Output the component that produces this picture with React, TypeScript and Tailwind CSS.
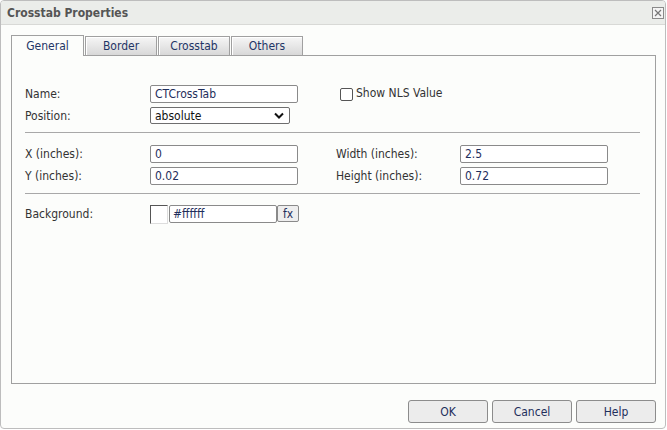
import React from "react";

const font = { fontFamily: '"DejaVu Sans Condensed", "DejaVu Sans", sans-serif' };

const tabs = ["General", "Border", "Crosstab", "Others"];

const Field = ({ value, width = "w-[148px]" }: { value: string; width?: string }) => (
  <div
    className={`flex h-[18px] ${width} items-center rounded-[2px] border border-[#8a8a8a] bg-white px-[4px] text-[12px] text-[#1f2f5c]`}
  >
    {value}
  </div>
);

const Label = ({ children, width = "w-[125px]" }: { children: React.ReactNode; width?: string }) => (
  <div className={`${width} shrink-0 text-[12px] text-[#333]`}>{children}</div>
);

const Separator = ({ className }: { className: string }) => (
  <div className={`mr-[15px] ml-[13px] h-px bg-[#a8a8a8] ${className}`} />
);

const Button = ({ label }: { label: string }) => (
  <button className="h-[23px] w-[80px] rounded-[3px] border border-[#8c8c8c] bg-[#ececec] text-[12px] text-[#1f2f5c]">
    {label}
  </button>
);

export default function App() {
  return (
    <div style={font} className="h-[430px] w-[667px] bg-white">
      <div className="flex h-[429px] w-[666px] flex-col overflow-hidden rounded-[4px] border border-[#bdbdbd] bg-[#fcfdfb]">
        {/* title bar */}
        <div className="flex h-[24px] shrink-0 items-center justify-between border-b border-[#d8d9d6] bg-[#ebedea] pr-[1px] pl-[6px]">
          <span className="text-[12px] font-bold text-[#555]">Crosstab Properties</span>
          <div className="flex h-[12px] w-[12px] items-center justify-center border border-[#8a8a8a] bg-[#f4f4f4]">
            <svg width="8" height="8" viewBox="0 0 8 8">
              <path d="M1 1L7 7M7 1L1 7" stroke="#777" strokeWidth="1.2" />
            </svg>
          </div>
        </div>

        {/* body */}
        <div className="flex flex-1 flex-col pt-[10px] pr-[9px] pl-[10px]">
          <div className="flex items-end gap-[1px]">
            {tabs.map((t, i) =>
              i === 0 ? (
                <div
                  key={t}
                  className="relative z-10 -mb-px flex h-[21px] w-[73px] items-center justify-center border border-b-0 border-[#a0a0a0] bg-[#fcfdfb] text-[12px] text-[#1f3566]"
                >
                  {t}
                </div>
              ) : (
                <div
                  key={t}
                  className="flex h-[19px] w-[72px] items-center justify-center border border-b-0 border-[#a0a0a0] bg-gradient-to-b from-[#f6f6f6] to-[#d8d8d8] text-[12px] text-[#1f3566] shadow-[inset_1px_1px_0_#ffffff]"
                >
                  {t}
                </div>
              )
            )}
          </div>

          <div className="flex h-[329px] flex-col border border-[#a0a0a0] bg-[#fcfdfb] pt-[29px]">
            <div className="flex flex-col gap-[4px] pl-[13px]">
              <div className="flex h-[18px] items-center">
                <Label>Name:</Label>
                <Field value="CTCrossTab" />
                <div className="ml-[42px] flex items-center gap-[3px] text-[12px] text-[#333]">
                  <div className="h-[13px] w-[13px] rounded-[2px] border border-[#555] bg-white" />
                  <span className="-mt-[2px]">Show NLS Value</span>
                </div>
              </div>
              <div className="flex h-[17px] items-center">
                <Label>Position:</Label>
                <div className="flex h-[17px] w-[140px] items-center justify-between rounded-[2px] border border-[#6e6e6e] bg-white pr-[5px] pl-[4px] text-[12px] text-[#111]">
                  <span>absolute</span>
                  <svg width="10" height="7" viewBox="0 0 10 7">
                    <path d="M1 1.5L5 5.5L9 1.5" stroke="#111" strokeWidth="2" fill="none" />
                  </svg>
                </div>
              </div>
            </div>

            <Separator className="mt-[8px] mb-[12px]" />

            <div className="flex flex-col gap-[4px] pl-[13px]">
              <div className="flex h-[18px] items-center">
                <Label>X (inches):</Label>
                <Field value="0" />
                <div className="w-[38px]" />
                <Label width="w-[124px]">Width (inches):</Label>
                <Field value="2.5" />
              </div>
              <div className="flex h-[18px] items-center">
                <Label>Y (inches):</Label>
                <Field value="0.02" />
                <div className="w-[38px]" />
                <Label width="w-[124px]">Height (inches):</Label>
                <Field value="0.72" />
              </div>
            </div>

            <Separator className="mt-[8px] mb-[11px]" />

            <div className="flex h-[19px] items-start pl-[13px]">
              <div className="flex h-[18px] items-center">
                <Label>Background:</Label>
              </div>
              <div className="h-[19px] w-[18px] border-t border-r border-b border-l border-t-[#555] border-r-[#ddd] border-b-[#ddd] border-l-[#555] bg-white" />
              <div className="ml-px flex h-[18px] w-[108px] items-center rounded-[2px] border border-[#8a8a8a] bg-white px-[3px] text-[12px] text-[#1f2f5c]">
                #ffffff
              </div>
              <div className="flex h-[17px] w-[22px] items-center justify-center rounded-[2px] border border-[#8a8a8a] bg-[#eeeeee] text-[12px] text-[#1f2f5c]">
                fx
              </div>
            </div>
          </div>

          <div className="mt-[16px] flex justify-end gap-[4px]">
            <Button label="OK" />
            <Button label="Cancel" />
            <Button label="Help" />
          </div>
        </div>
      </div>
    </div>
  );
}
